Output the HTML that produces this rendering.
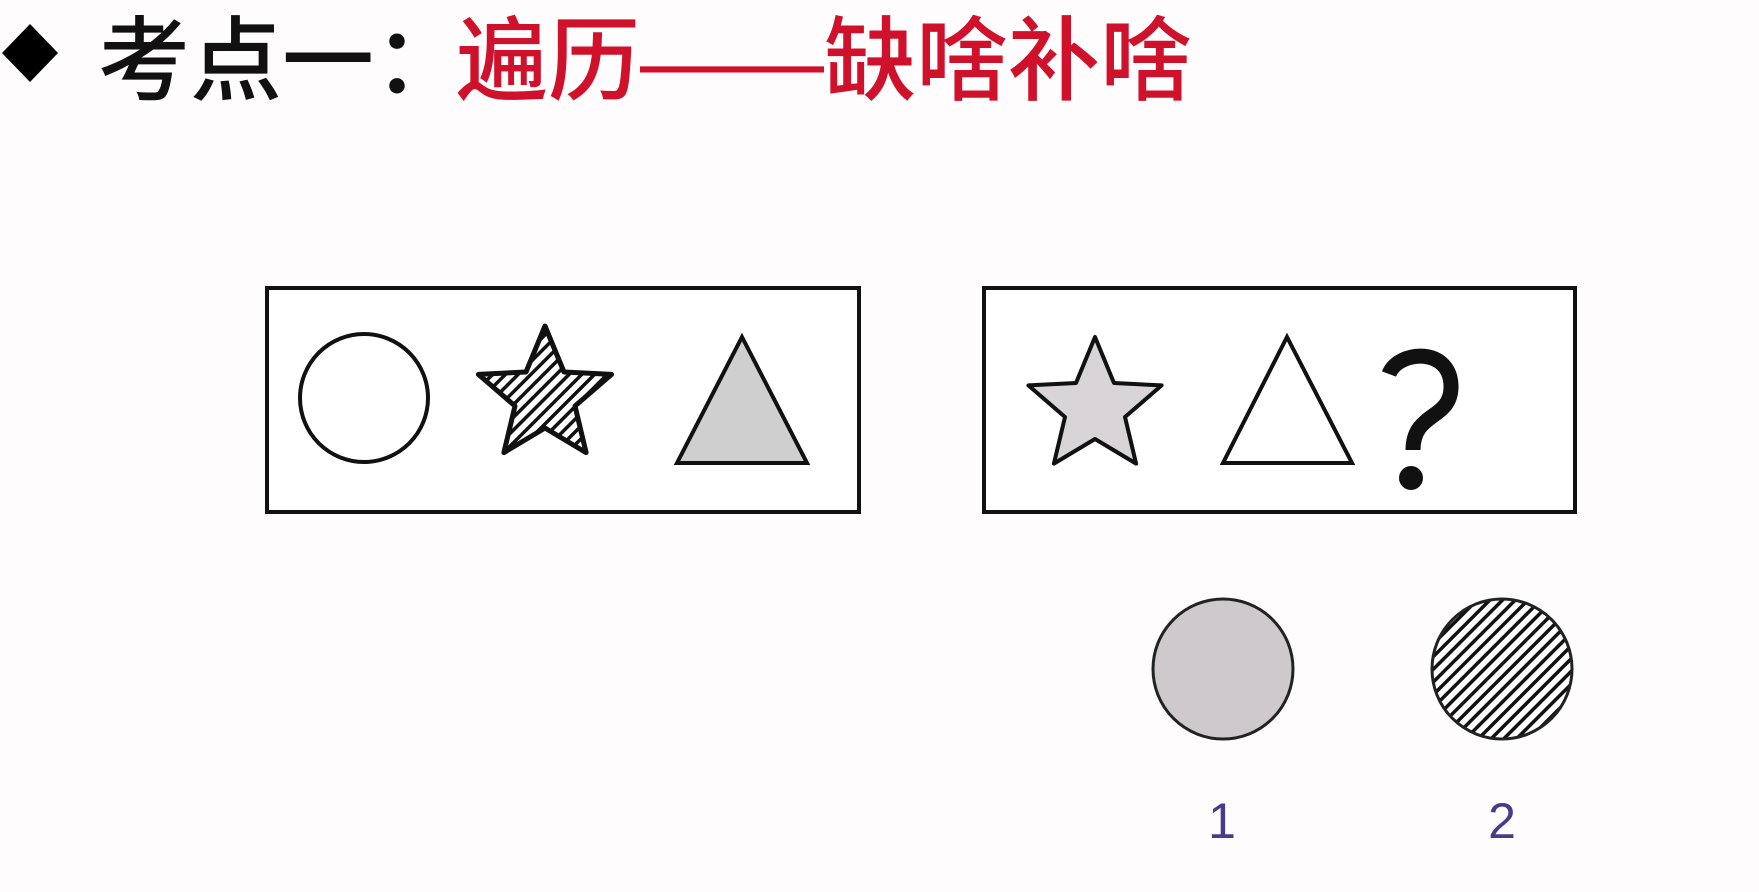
<!DOCTYPE html>
<html><head><meta charset="utf-8"><style>
html,body{margin:0;padding:0;background:#fffcfd;width:1759px;height:892px;overflow:hidden;}
.t{position:absolute;top:10px;font-family:"Liberation Sans","Noto Sans CJK SC",sans-serif;font-size:92px;font-weight:500;line-height:104px;white-space:nowrap;}
</style></head><body>
<svg width="1759" height="892" style="position:absolute;left:0;top:0">
<defs>
<pattern id="h" patternUnits="userSpaceOnUse" width="9" height="9" patternTransform="rotate(-45)">
<rect width="9" height="9" fill="#fff"/><rect width="9" height="3.5" fill="#111"/>
</pattern>
<polygon id="st" points="0,-70 19,-24 66.6,-21.6 30,10 41.1,56.6 0,32 -41.1,56.6 -30,10 -66.6,-21.6 -19,-24"/>
</defs>
<polygon points="2,53 30,24 58,53 30,82" fill="#000"/>
<rect x="267" y="288" width="592" height="224" fill="#fff" stroke="#111" stroke-width="4"/>
<rect x="984" y="288" width="591" height="224" fill="#fff" stroke="#111" stroke-width="4"/>
<ellipse cx="364" cy="398" rx="64" ry="64" fill="#fff" stroke="#111" stroke-width="4"/>
<use href="#st" transform="translate(545,396)" fill="url(#h)" stroke="#111" stroke-width="5" stroke-linejoin="round"/>
<polygon points="742,337 807,463 677,463" fill="#cfcfcf" stroke="#111" stroke-width="4"/>
<use href="#st" transform="translate(1095,407)" fill="#d8d4d8" stroke="#111" stroke-width="4" stroke-linejoin="round"/>
<polygon points="1287,337 1352,463 1223,463" fill="#fff" stroke="#111" stroke-width="4"/>
<path d="M1389,374 C1398,350 1452,346 1451,388 C1450,420 1413,412 1413,450" fill="none" stroke="#111" stroke-width="15"/>
<circle cx="1411" cy="478" r="12" fill="#111"/>
<circle cx="1223" cy="669" r="70" fill="#cdc9cd" stroke="#222" stroke-width="3"/>
<circle cx="1502" cy="669" r="70" fill="url(#h)" stroke="#222" stroke-width="3"/>
<text x="1222" y="838" font-family="Liberation Sans,sans-serif" font-size="50" text-anchor="middle" fill="#4a3a8c">1</text>
<text x="1502" y="838" font-family="Liberation Sans,sans-serif" font-size="50" text-anchor="middle" fill="#4a3a8c">2</text>
</svg>
<div class="t" style="left:98px;color:#111;">考点一：</div>
<div class="t" style="left:456px;color:#d0112b;">遍历——缺啥补啥</div>
</body></html>
